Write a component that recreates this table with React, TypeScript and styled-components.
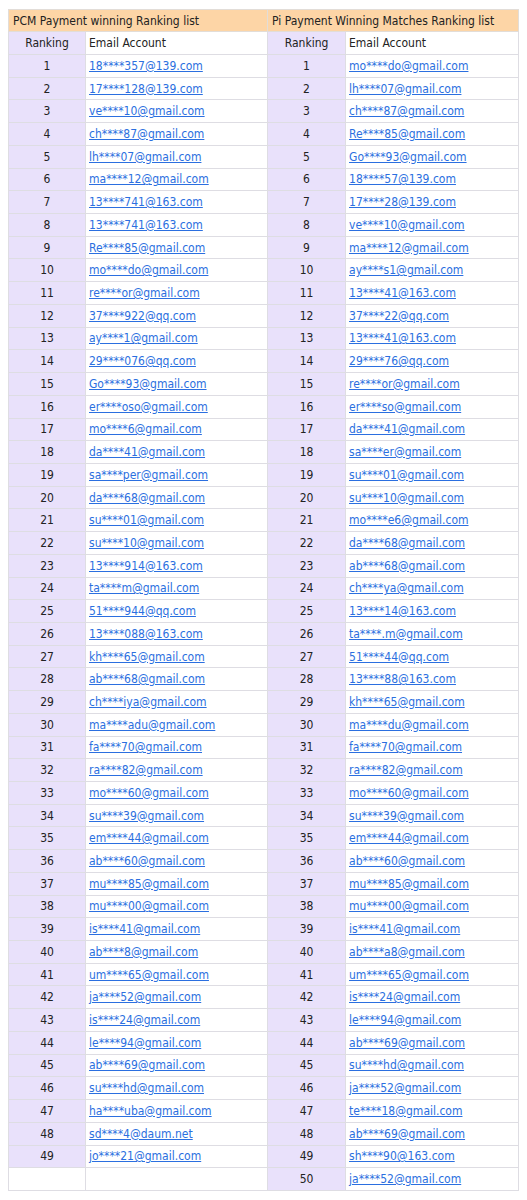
import React from "react";
import styled, { createGlobalStyle } from "styled-components";

const Global = createGlobalStyle`
  html, body { margin: 0; padding: 0; background: #ffffff; }
  body { padding: 9px 8px; font-family: "DejaVu Sans Condensed", "DejaVu Sans", sans-serif; font-size: 12px; color: #222; }
`;

const left: string[] = [
  "18****357@139.com", "17****128@139.com", "ve****10@gmail.com", "ch****87@gmail.com", "lh****07@gmail.com",
  "ma****12@gmail.com", "13****741@163.com", "13****741@163.com", "Re****85@gmail.com", "mo****do@gmail.com",
  "re****or@gmail.com", "37****922@qq.com", "ay****1@gmail.com", "29****076@qq.com", "Go****93@gmail.com",
  "er****oso@gmail.com", "mo****6@gmail.com", "da****41@gmail.com", "sa****per@gmail.com", "da****68@gmail.com",
  "su****01@gmail.com", "su****10@gmail.com", "13****914@163.com", "ta****m@gmail.com", "51****944@qq.com",
  "13****088@163.com", "kh****65@gmail.com", "ab****68@gmail.com", "ch****iya@gmail.com", "ma****adu@gmail.com",
  "fa****70@gmail.com", "ra****82@gmail.com", "mo****60@gmail.com", "su****39@gmail.com", "em****44@gmail.com",
  "ab****60@gmail.com", "mu****85@gmail.com", "mu****00@gmail.com", "is****41@gmail.com", "ab****8@gmail.com",
  "um****65@gmail.com", "ja****52@gmail.com", "is****24@gmail.com", "le****94@gmail.com", "ab****69@gmail.com",
  "su****hd@gmail.com", "ha****uba@gmail.com", "sd****4@daum.net", "jo****21@gmail.com",
];

const right: string[] = [
  "mo****do@gmail.com", "lh****07@gmail.com", "ch****87@gmail.com", "Re****85@gmail.com", "Go****93@gmail.com",
  "18****57@139.com", "17****28@139.com", "ve****10@gmail.com", "ma****12@gmail.com", "ay****s1@gmail.com",
  "13****41@163.com", "37****22@qq.com", "13****41@163.com", "29****76@qq.com", "re****or@gmail.com",
  "er****so@gmail.com", "da****41@gmail.com", "sa****er@gmail.com", "su****01@gmail.com", "su****10@gmail.com",
  "mo****e6@gmail.com", "da****68@gmail.com", "ab****68@gmail.com", "ch****ya@gmail.com", "13****14@163.com",
  "ta****.m@gmail.com", "51****44@qq.com", "13****88@163.com", "kh****65@gmail.com", "ma****du@gmail.com",
  "fa****70@gmail.com", "ra****82@gmail.com", "mo****60@gmail.com", "su****39@gmail.com", "em****44@gmail.com",
  "ab****60@gmail.com", "mu****85@gmail.com", "mu****00@gmail.com", "is****41@gmail.com", "ab****a8@gmail.com",
  "um****65@gmail.com", "is****24@gmail.com", "le****94@gmail.com", "ab****69@gmail.com", "su****hd@gmail.com",
  "ja****52@gmail.com", "te****18@gmail.com", "ab****69@gmail.com", "sh****90@163.com", "ja****52@gmail.com",
];

const Table = styled.table`
  width: 510px;
  table-layout: fixed;
  border-collapse: collapse;
`;

const TitleCell = styled.th`
  background: #fdd5a6;
  border: 1px solid #e2ddd8;
  height: 22px;
  padding: 0 4px;
  text-align: left;
  font-weight: normal;
  white-space: nowrap;
  box-sizing: border-box;
`;

const Row = styled.tr`
  height: 22.72px;
`;

const HeadRow = styled.tr`
  height: 23px;
`;

const RankCell = styled.td<{ $filled: boolean }>`
  background: ${(p) => (p.$filled ? "#e9e1fb" : "#ffffff")};
  border: 1px solid #dedde3;
  text-align: center;
  padding: 0;
`;

const MailCell = styled.td`
  background: #ffffff;
  border: 1px solid #dedde3;
  padding: 0 3px;
  white-space: nowrap;
  overflow: hidden;
`;

const Mail = styled.a`
  color: #2b6fe0;
  text-decoration: underline;
`;

export default function App() {
  const rows = Array.from({ length: 50 }, (_, i) => i);
  return (
    <>
      <Global />
      <Table>
        <colgroup>
          <col style={{ width: 77 }} />
          <col style={{ width: 182 }} />
          <col style={{ width: 78 }} />
          <col style={{ width: 173 }} />
        </colgroup>
        <thead>
          <tr>
            <TitleCell colSpan={2}>PCM Payment winning Ranking list</TitleCell>
            <TitleCell colSpan={2}>Pi Payment Winning Matches Ranking list</TitleCell>
          </tr>
        </thead>
        <tbody>
          <HeadRow>
            <RankCell $filled>Ranking</RankCell>
            <MailCell>Email Account</MailCell>
            <RankCell $filled>Ranking</RankCell>
            <MailCell>Email Account</MailCell>
          </HeadRow>
          {rows.map((i) => (
            <Row key={i}>
              <RankCell $filled={i < left.length}>{i < left.length ? i + 1 : ""}</RankCell>
              <MailCell>{left[i] ? <Mail href="#">{left[i]}</Mail> : null}</MailCell>
              <RankCell $filled={i < right.length}>{i < right.length ? i + 1 : ""}</RankCell>
              <MailCell>{right[i] ? <Mail href="#">{right[i]}</Mail> : null}</MailCell>
            </Row>
          ))}
        </tbody>
      </Table>
    </>
  );
}
